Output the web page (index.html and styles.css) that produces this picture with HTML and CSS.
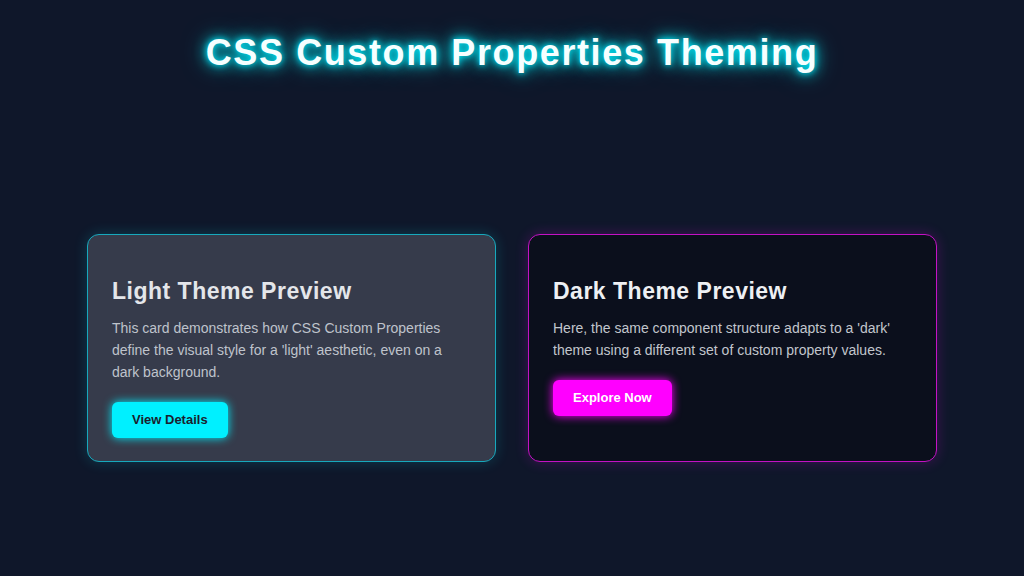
FILE: index.html
```html
<!DOCTYPE html>
<html lang="en">
<head>
    <meta charset="UTF-8">
    <meta name="viewport" content="width=device-width, initial-scale=1.0">
    <title>CSS Custom Properties Theming</title>
    <link rel="stylesheet" href="styles.css">
</head>
<body>
    <h1 class="page-title">CSS Custom Properties Theming</h1>

    <main class="stage">
        <div class="cards">
            <!-- Light theme card -->
            <div class="card theme-light">
                <h2>Light Theme Preview</h2>
                <p>This card demonstrates how CSS Custom Properties define the visual style for a 'light' aesthetic, even on a dark background.</p>
                <button class="card-btn">View Details</button>
            </div>

            <!-- Dark theme card -->
            <div class="card theme-dark">
                <h2>Dark Theme Preview</h2>
                <p>Here, the same component structure adapts to a 'dark' theme using a different set of custom property values.</p>
                <button class="card-btn">Explore Now</button>
            </div>
        </div>
    </main>
</body>
</html>
```

FILE: styles.css
```css
:root {
    --page-bg: #0f172a;
    --neon-cyan: #00f0ff;
    --neon-pink: #ff00ff;
}
html, body {
    height: 100%;
}
body {
    font-family: "Liberation Sans", Arial, sans-serif;
    background: var(--page-bg);
    margin: 0;
    padding: 32px 0;
    box-sizing: border-box;
    display: flex;
    flex-direction: column;
    align-items: center;
}
.page-title {
    margin: 0;
    font-size: 36px;
    letter-spacing: 1.6px;
    color: #f6ffff;
    text-shadow: 0 0 6px var(--neon-cyan), 0 0 14px var(--neon-cyan), 0 0 24px rgba(0, 240, 255, 0.6);
}
.stage {
    flex: 1;
    display: flex;
    align-items: center;
    padding-top: 78px;
}
.cards {
    width: 850px;
    display: flex;
    gap: 32px;
}

/* Theme variables live on the card, each theme swaps them */
.card {
    --card-bg: #363b4b;
    --card-border: #17a9bd;
    --card-glow: rgba(0, 240, 255, 0.18);
    --card-title: #e4e6ea;
    --card-text: #bfc3cb;
    --btn-bg: var(--neon-cyan);
    --btn-text: #1a1e2e;
    flex: 1;
    padding: 24px 24px 23px;
    border-radius: 12px;
    background: var(--card-bg);
    border: 1px solid var(--card-border);
    box-shadow: 0 0 14px var(--card-glow);
}
.theme-dark {
    --card-bg: #0b0f1c;
    --card-border: #c412c4;
    --card-glow: rgba(255, 0, 255, 0.2);
    --card-title: #eef0f3;
    --card-text: #c2c6cd;
    --btn-bg: var(--neon-pink);
    --btn-text: #ffffff;
}
.card h2 {
    margin: 19px 0 13px;
    font-size: 23px;
    letter-spacing: 0.5px;
    color: var(--card-title);
}
.card p {
    margin: 0 0 18px;
    font-size: 14px;
    line-height: 1.55;
    color: var(--card-text);
}
.card-btn {
    font-family: inherit;
    font-size: 13px;
    font-weight: bold;
    line-height: 16px;
    padding: 10px 20px;
    border: none;
    border-radius: 6px;
    background: var(--btn-bg);
    color: var(--btn-text);
    box-shadow: 0 0 10px var(--btn-bg);
    cursor: pointer;
}
```
